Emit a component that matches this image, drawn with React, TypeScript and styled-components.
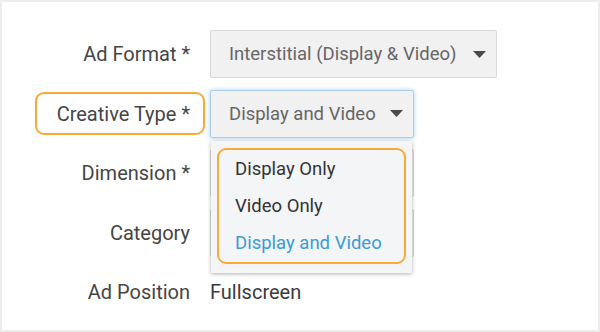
import React from 'react'
import styled, { createGlobalStyle } from 'styled-components';

const Global = createGlobalStyle`
    body{
        margin: 0;
        background: #ffffff;
        font-family: Roboto, "Liberation Sans", sans-serif;
    }
`;

interface fieldRow{
    label: string;
    highlighted?: boolean;
    children?: React.ReactNode;
}

const Row: React.FC<fieldRow> = ({ label, highlighted, children }) => {
  return (
    <FormRow>
        <LabelCell>
            <Label $highlighted={highlighted}>{label}</Label>
        </LabelCell>
        <FieldCell>{children}</FieldCell>
    </FormRow>
  )
}

const Caret = () => (
    <svg width="13" height="7" viewBox="0 0 13 7">
        <path d="M0 0 L13 0 L6.5 7 Z" fill="#4a4a4a" />
    </svg>
)

const options = ['Display Only', 'Video Only', 'Display and Video'];

const App: React.FC = () => {
  return (
    <>
        <Global />
        <Frame>
            <Form>
                <Row label="Ad Format *">
                    <Select $width={287}>
                        <SelectText>Interstitial (Display &amp; Video)</SelectText>
                        <Caret />
                    </Select>
                </Row>
                <Row label="Creative Type *" highlighted>
                    <Select $width={204} $focused>
                        <SelectText>Display and Video</SelectText>
                        <Caret />
                    </Select>
                    <Menu>
                        <MenuHighlight>
                            {options.map((o, i) => (
                                <Option key={o} $selected={i === 2}>{o}</Option>
                            ))}
                        </MenuHighlight>
                    </Menu>
                </Row>
                <Row label="Dimension *">
                    <Select $width={204} />
                </Row>
                <Row label="Category">
                    <Select $width={204} />
                </Row>
                <Row label="Ad Position">
                    <Value>Fullscreen</Value>
                </Row>
            </Form>
        </Frame>
    </>
  )
}

export default App;

const Frame = styled.div`
    width: 600px;
    height: 332px;
    box-sizing: border-box;
    border: 2px solid #ececec;
    background: #ffffff;
    padding-top: 28px;
`;
const Form = styled.div`
    display: flex;
    flex-direction: column;
    gap: 11.5px;
`;
const FormRow = styled.div`
    display: flex;
    align-items: center;
    height: 48px;
`;
const LabelCell = styled.div`
    width: 203px;
    display: flex;
    justify-content: flex-end;
    margin-right: 5px;
`;
const Label = styled.div<{ $highlighted?: boolean }>`
    box-sizing: border-box;
    height: 43px;
    display: flex;
    align-items: center;
    justify-content: flex-end;
    width: 170px;
    padding-right: 13px;
    border: 2px solid ${p => p.$highlighted ? '#f8a93c' : 'transparent'};
    border-radius: 9px;
    font-size: 20px;
    color: #454545;
    white-space: nowrap;
`;
const FieldCell = styled.div`
    position: relative;
    display: flex;
    align-items: center;
    height: 100%;
`;
const Select = styled.div<{ $width: number; $focused?: boolean }>`
    box-sizing: border-box;
    width: ${p => p.$width}px;
    height: 48px;
    display: flex;
    align-items: center;
    justify-content: space-between;
    padding: 0 10px 0 18px;
    background: #f1f1f1;
    border: 1px solid ${p => p.$focused ? '#a9cdea' : '#d9d9d9'};
    border-radius: 2px;
    box-shadow: ${p => p.$focused ? '0 0 4px rgba(90, 165, 230, 0.55)' : 'none'};
`;
const SelectText = styled.span`
    font-size: 18.5px;
    color: #666666;
    white-space: nowrap;
`;
const Menu = styled.div`
    position: absolute;
    top: 51px;
    left: 1px;
    width: 201px;
    height: 132px;
    box-sizing: border-box;
    padding: 7px 6px 9px 6px;
    background: #f4f5f7;
    box-shadow: 0 1px 4px rgba(0, 0, 0, 0.3);
    z-index: 2;
`;
const MenuHighlight = styled.div`
    box-sizing: border-box;
    height: 100%;
    border: 2px solid #f8a93c;
    border-radius: 9px;
    display: flex;
    flex-direction: column;
    justify-content: center;
    gap: 11px;
    padding-left: 16px;
`;
const Option = styled.div<{ $selected?: boolean }>`
    font-size: 18.5px;
    line-height: 26px;
    color: ${p => p.$selected ? '#3b9bd6' : '#333333'};
    white-space: nowrap;
`;
const Value = styled.div`
    font-size: 20px;
    color: #3a3a3a;
`;
